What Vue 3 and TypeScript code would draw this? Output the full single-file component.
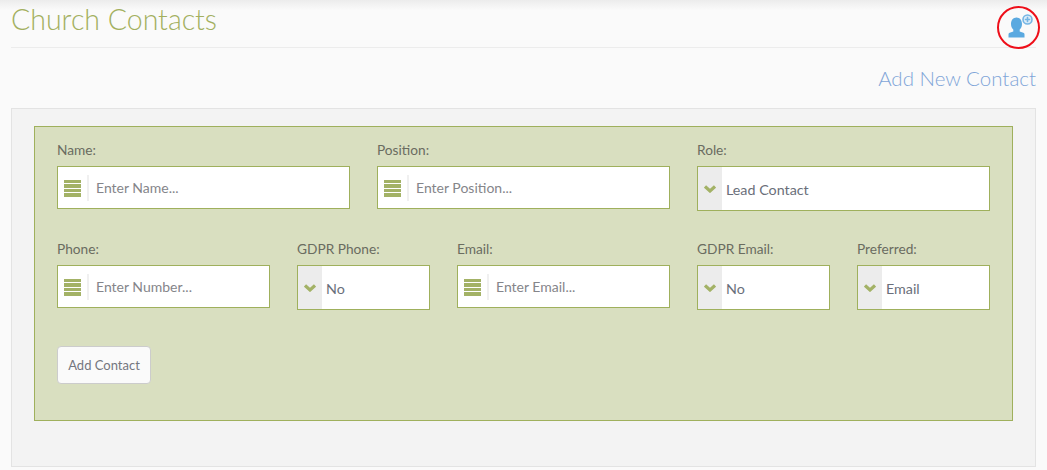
<template>
  <div class="page">
    <div class="page-head">
      <h1>Church Contacts</h1>
      <button class="add-btn" type="button" aria-label="Add contact">
        <svg width="28" height="28" viewBox="0 0 28 28">
          <path d="M11.500 3.500c3.300 0 5.500 2.800 5.500 6.500 0 2.400-.9 4.400-2.300 5.600v1.900l3.600 1.300c.8.300 1.200.8 1.200 1.600v3.100H3.500v-3.100c0-.8.4-1.300 1.200-1.600l3.600-1.300v-1.900C6.900 14.400 6 12.400 6 10c0-3.700 2.200-6.500 5.500-6.500z" fill="#5aa9e0" />
          <circle cx="22.500" cy="5.500" r="4.500" fill="#dfeef9" stroke="#74b5e4" stroke-width="1.600" />
          <path d="M22.500 2.800v5.400M19.800 5.500h5.400" stroke="#74b5e4" stroke-width="1.600" />
        </svg>
      </button>
    </div>

    <h2 class="sub-title">Add New Contact</h2>

    <div class="well">
      <form class="contact-form" @submit.prevent>
        <div class="fields">
          <div v-for="field in fields" :key="field.label" class="field" :class="`span-${field.span}`">
            <label>{{ field.label }}</label>

            <div v-if="field.options" class="select-box">
              <span class="select-arrow">
                <svg width="12" height="8" viewBox="0 0 12 8">
                  <path d="M1 1.500 6 6l5-4.500" fill="none" stroke="#a3b266" stroke-width="3.200" />
                </svg>
              </span>
              <span class="select-value">{{ field.options }}</span>
            </div>

            <div v-else class="input-box">
              <span class="input-icon">
                <i></i><i></i><i></i><i></i>
              </span>
              <input type="text" :placeholder="field.placeholder" />
            </div>
          </div>
        </div>

        <button class="submit-btn" type="button">Add Contact</button>
      </form>
    </div>
  </div>
</template>

<script setup lang="ts">
interface Field {
  label: string
  span: number
  placeholder?: string
  options?: string
}

const fields: Field[] = [
  { label: 'Name:', span: 4, placeholder: 'Enter Name...' },
  { label: 'Position:', span: 4, placeholder: 'Enter Position...' },
  { label: 'Role:', span: 4, options: 'Lead Contact' },
  { label: 'Phone:', span: 3, placeholder: 'Enter Number...' },
  { label: 'GDPR Phone:', span: 2, options: 'No' },
  { label: 'Email:', span: 3, placeholder: 'Enter Email...' },
  { label: 'GDPR Email:', span: 2, options: 'No' },
  { label: 'Preferred:', span: 2, options: 'Email' }
]
</script>

<style>
body {
  background: #fafafa;
}
</style>

<style scoped>
.page {
  box-sizing: border-box;
  height: 470px;
  padding: 0 11px;
  overflow: hidden;
  font-family: Lato, "Open Sans", sans-serif;
  background: linear-gradient(#ececec 0, #fafafa 10px);
}

.page-head {
  display: flex;
  justify-content: space-between;
  align-items: flex-start;
  height: 47px;
  border-bottom: 1px solid #ececec;
}

.page-head h1 {
  margin: 0;
  padding-top: 2px;
  font-size: 28.500px;
  line-height: 34px;
  font-weight: 300;
  color: #a3b05f;
}

.add-btn {
  flex: none;
  box-sizing: border-box;
  width: 43px;
  height: 43px;
  margin: 6px -4px 0 0;
  padding: 0;
  display: flex;
  align-items: center;
  justify-content: center;
  background: transparent;
  border: 2.500px solid #ee0f1a;
  border-radius: 50%;
}

.sub-title {
  margin: 18px 0;
  text-align: right;
  font-size: 20.500px;
  line-height: 24px;
  font-weight: 300;
  color: #7fa5d8;
}

.well {
  box-sizing: border-box;
  height: 359px;
  padding: 17px 22px;
  background: #f3f3f3;
  border: 1px solid #e3e3e3;
}

.contact-form {
  box-sizing: border-box;
  height: 295px;
  padding: 14px 22px;
  background: #d9dfc0;
  border: 1px solid #9fb05c;
}

.fields {
  display: grid;
  grid-template-columns: repeat(12, 1fr);
  column-gap: 27px;
  row-gap: 29px;
}

.span-2 { grid-column: span 2; }
.span-3 { grid-column: span 3; }
.span-4 { grid-column: span 4; }

.field label {
  display: block;
  margin-bottom: 8px;
  font-size: 13.700px;
  line-height: 17px;
  color: #6a6c60;
}

.input-box,
.select-box {
  box-sizing: border-box;
  display: flex;
  align-items: center;
  background: #fff;
  border: 1px solid #9fb05c;
}

.input-box {
  height: 43px;
  padding: 0 0 0 6px;
}

.select-box {
  height: 45px;
}

.input-icon {
  flex: none;
  box-sizing: border-box;
  width: 25px;
  height: 26px;
  padding: 5px 6px 4px 0;
  margin-right: 7px;
  display: flex;
  flex-direction: column;
  justify-content: space-between;
  border-right: 2px solid #f0f0f0;
}

.input-icon i {
  display: block;
  height: 3.500px;
  background: #a3b266;
}

input {
  flex: 1;
  min-width: 0;
  border: 0;
  outline: 0;
  padding: 0;
  font: inherit;
  font-size: 14px;
  background: transparent;
}

input::placeholder {
  color: #85858a;
  opacity: 1;
}

.select-arrow {
  flex: none;
  align-self: stretch;
  width: 24px;
  display: flex;
  align-items: center;
  justify-content: center;
  background: #ececec;
}

.select-value {
  padding: 2px 0 0 4px;
  font-size: 14.300px;
  color: #6a6f7a;
}

.submit-btn {
  display: block;
  box-sizing: border-box;
  width: 94px;
  height: 38px;
  margin-top: 36px;
  padding: 0;
  font: inherit;
  font-size: 13px;
  color: #74767e;
  background: #fafafa;
  border: 1px solid #ccc;
  border-radius: 4px;
}
</style>
